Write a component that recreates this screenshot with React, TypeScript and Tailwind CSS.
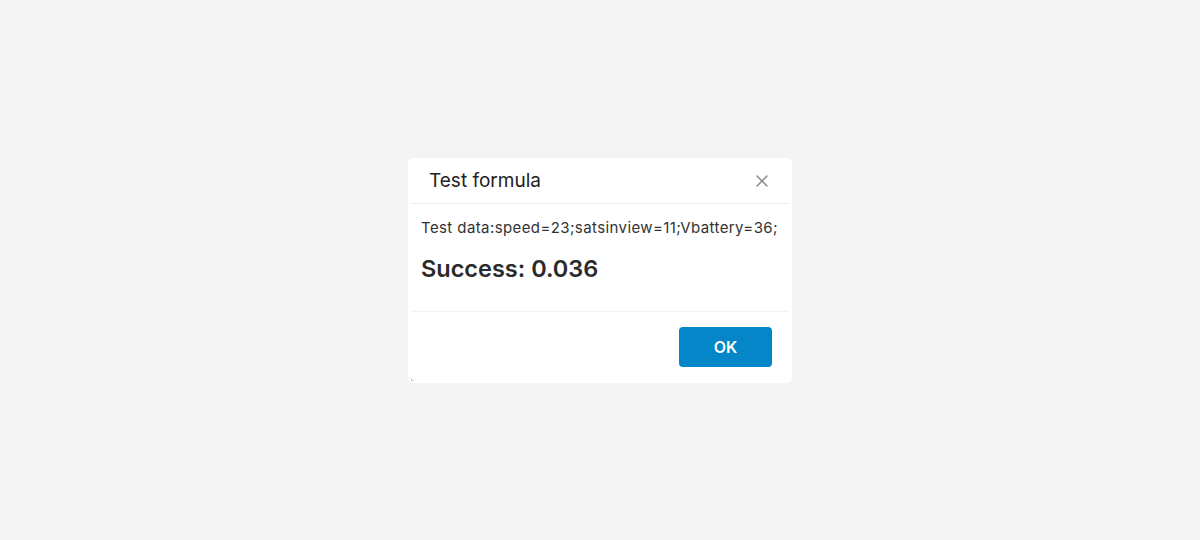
import React from 'react';

const App: React.FC = () => {
  return (
    <div className="w-[1200px] h-[540px] bg-[#f4f4f4] flex items-center justify-center font-['Inter',sans-serif]">
      <div className="relative w-[384px] h-[225px] bg-white rounded-[6px] flex flex-col">
        {/* header */}
        <div className="h-[46px] mx-[3px] border-b border-[#f0f0f0] flex items-center justify-between pl-[18px] pr-[20px] pt-[2px]">
          <span className="text-[19px] text-[#222]">Test formula</span>
          <svg width="14" height="14" viewBox="0 0 14 14" className="text-[#888]">
            <path d="M2 2L12 12M12 2L2 12" stroke="currentColor" strokeWidth="1.5" strokeLinecap="round" />
          </svg>
        </div>

        {/* body */}
        <div className="flex-1 px-[10px] pt-[14px] border-b border-[#f2f2f2] mx-[3px]">
          <p className="text-[15px] tracking-[0.4px] text-[#333] leading-[20px] whitespace-nowrap">Test data:speed=23;satsinview=11;Vbattery=36;</p>
          <p className="mt-[16px] text-[23.5px] font-semibold text-[#2a2a2a] leading-[30px]">Success: 0.036</p>
        </div>

        {/* footer */}
        <div className="h-[71px] flex items-start justify-end pt-[15px] pr-[20px]">
          <button className="w-[93px] h-[40px] bg-[#0486c8] rounded-[4px] text-white text-[16px] font-semibold">OK</button>
        </div>

        <span className="absolute left-[3px] bottom-[2px] w-[3px] h-[3px] border-l border-b border-[#ccc]" />
      </div>
    </div>
  );
};

export default App;
